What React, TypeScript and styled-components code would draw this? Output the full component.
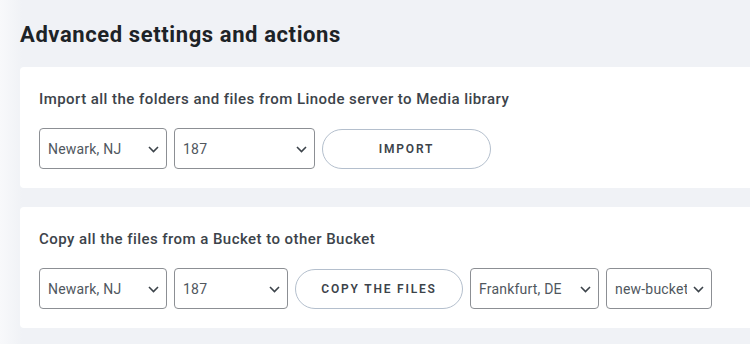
import React from "react";
import styled, { createGlobalStyle } from "styled-components";

const Global = createGlobalStyle`
  html, body {
    margin: 0;
    padding: 0;
    overflow: hidden;
  }
  body {
    font-family: Roboto, "Liberation Sans", Arial, sans-serif;
    background: linear-gradient(to right, #f8f9fb 0px, #f0f2f6 22px, #f0f2f6 100%);
    min-height: 344px;
  }
`;

const Page = styled.main`
  padding: 21px 0 0 20px;
  width: 750px;
  box-sizing: border-box;
`;

const Title = styled.h1`
  margin: 0 0 18px;
  font-size: 22px;
  line-height: 28px;
  font-weight: 700;
  letter-spacing: 0.6px;
  color: #1d2327;
`;

const Card = styled.section`
  background: #ffffff;
  border-radius: 4px;
  margin-right: -20px;
  padding: 22px 19px 19px;
  margin-bottom: 19px;
`;

const CardText = styled.p`
  margin: 0 0 18px;
  font-size: 15px;
  line-height: 21px;
  font-weight: 500;
  letter-spacing: 0.45px;
  color: #3c434a;
`;

const Controls = styled.div`
  display: flex;
  align-items: center;
  gap: 7px;
`;

const SelectWrap = styled.div<{ $w: number }>`
  position: relative;
  width: ${(p) => p.$w}px;
  height: 41px;
`;

const NativeSelect = styled.select`
  appearance: none;
  -webkit-appearance: none;
  width: 100%;
  height: 100%;
  box-sizing: border-box;
  border: 1px solid #8c8f94;
  border-radius: 4px;
  background: #fff;
  padding: 0 24px 0 8px;
  font-family: Roboto, "Liberation Sans", Arial, sans-serif;
  font-size: 14px;
  letter-spacing: 0.2px;
  color: #50575e;
  outline: none;
`;

const Chevron = styled.svg`
  position: absolute;
  right: 8px;
  top: 50%;
  margin-top: -3px;
  width: 11px;
  height: 7px;
  pointer-events: none;
`;

const PillButton = styled.button<{ $w: number }>`
  width: ${(p) => p.$w}px;
  height: 40px;
  box-sizing: border-box;
  border: 1px solid #b4bfcd;
  border-radius: 20px;
  background: #fff;
  font-family: Roboto, "Liberation Sans", Arial, sans-serif;
  font-size: 12px;
  font-weight: 600;
  letter-spacing: 1.8px;
  color: #3c434a;
  text-transform: uppercase;
  padding: 0;
  cursor: pointer;
`;

function Select({ value, width }: { value: string; width: number }) {
  return (
    <SelectWrap $w={width}>
      <NativeSelect defaultValue={value}>
        <option value={value}>{value}</option>
      </NativeSelect>
      <Chevron viewBox="0 0 11 7">
        <path d="M1 1l4.5 4.5L10 1" fill="none" stroke="#3c434a" strokeWidth="1.6" />
      </Chevron>
    </SelectWrap>
  );
}

export default function App() {
  return (
    <>
      <Global />
      <Page>
        <Title>Advanced settings and actions</Title>
        <Card>
          <CardText>Import all the folders and files from Linode server to Media library</CardText>
          <Controls>
            <Select value="Newark, NJ" width={128} />
            <Select value="187" width={141} />
            <PillButton $w={169}>Import</PillButton>
          </Controls>
        </Card>
        <Card>
          <CardText>Copy all the files from a Bucket to other Bucket</CardText>
          <Controls>
            <Select value="Newark, NJ" width={128} />
            <Select value="187" width={114} />
            <PillButton $w={168}>Copy the files</PillButton>
            <Select value="Frankfurt, DE" width={129} />
            <Select value="new-bucket" width={106} />
          </Controls>
        </Card>
      </Page>
    </>
  );
}
